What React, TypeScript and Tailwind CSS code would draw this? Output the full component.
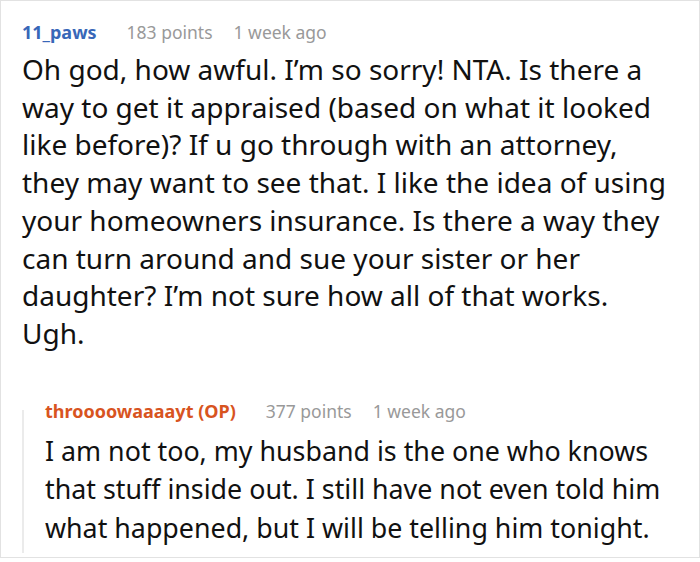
import React from 'react';

type CommentProps = {
  author: string;
  authorClass: string;
  points: number;
  age: string;
};

function CommentHeader({ author, authorClass, points, age }: CommentProps) {
  return (
    <div className="flex items-baseline leading-[22px]">
      <span className={`text-[18px] font-bold ${authorClass}`}>{author}</span>
      <span className="ml-[30px] text-[17.5px] text-[#999999]">{points} points</span>
      <span className="ml-[21px] text-[17.5px] text-[#999999]">{age}</span>
    </div>
  );
}

function CommentBody({ body, cls }: { body: string[]; cls: string }) {
  return (
    <div className={`text-[#111111] ${cls}`}>
      {body.map((line, i) => (
        <div key={i} className="whitespace-nowrap">{line}</div>
      ))}
    </div>
  );
}

export default function App() {
  return (
    <div className="w-[700px] h-[562px] bg-white">
      <div
        className="h-[558px] border border-[#e2e2e2] overflow-hidden"
        style={{ fontFamily: '"Noto Sans", "Open Sans", sans-serif' }}
      >
        <div className="pl-[21px] pt-[20px]">
          <CommentHeader author="11_paws" authorClass="text-[#3867b8]" points={183} age="1 week ago" />
          <div className="mt-[8px]">
            <CommentBody
              cls="text-[28px] leading-[37.7px]"
              body={[
                'Oh god, how awful. I’m so sorry! NTA. Is there a',
                'way to get it appraised (based on what it looked',
                'like before)? If u go through with an attorney,',
                'they may want to see that. I like the idea of using',
                'your homeowners insurance. Is there a way they',
                'can turn around and sue your sister or her',
                'daughter? I’m not sure how all of that works.',
                'Ugh.',
              ]}
            />
          </div>

          {/* reply */}
          <div className="mt-[47px] flex">
            <div className="w-[2px] mt-[10px] bg-[#ebebeb]" />
            <div className="pl-[21px] pb-[6px]">
              <CommentHeader author="throooowaaaayt (OP)" authorClass="text-[#d8541f]" points={377} age="1 week ago" />
              <div className="mt-[10px]">
                <CommentBody
                  cls="text-[26.8px] leading-[38.5px]"
                  body={[
                    'I am not too, my husband is the one who knows',
                    'that stuff inside out. I still have not even told him',
                    'what happened, but I will be telling him tonight.',
                  ]}
                />
              </div>
            </div>
          </div>
        </div>
      </div>
    </div>
  );
}
